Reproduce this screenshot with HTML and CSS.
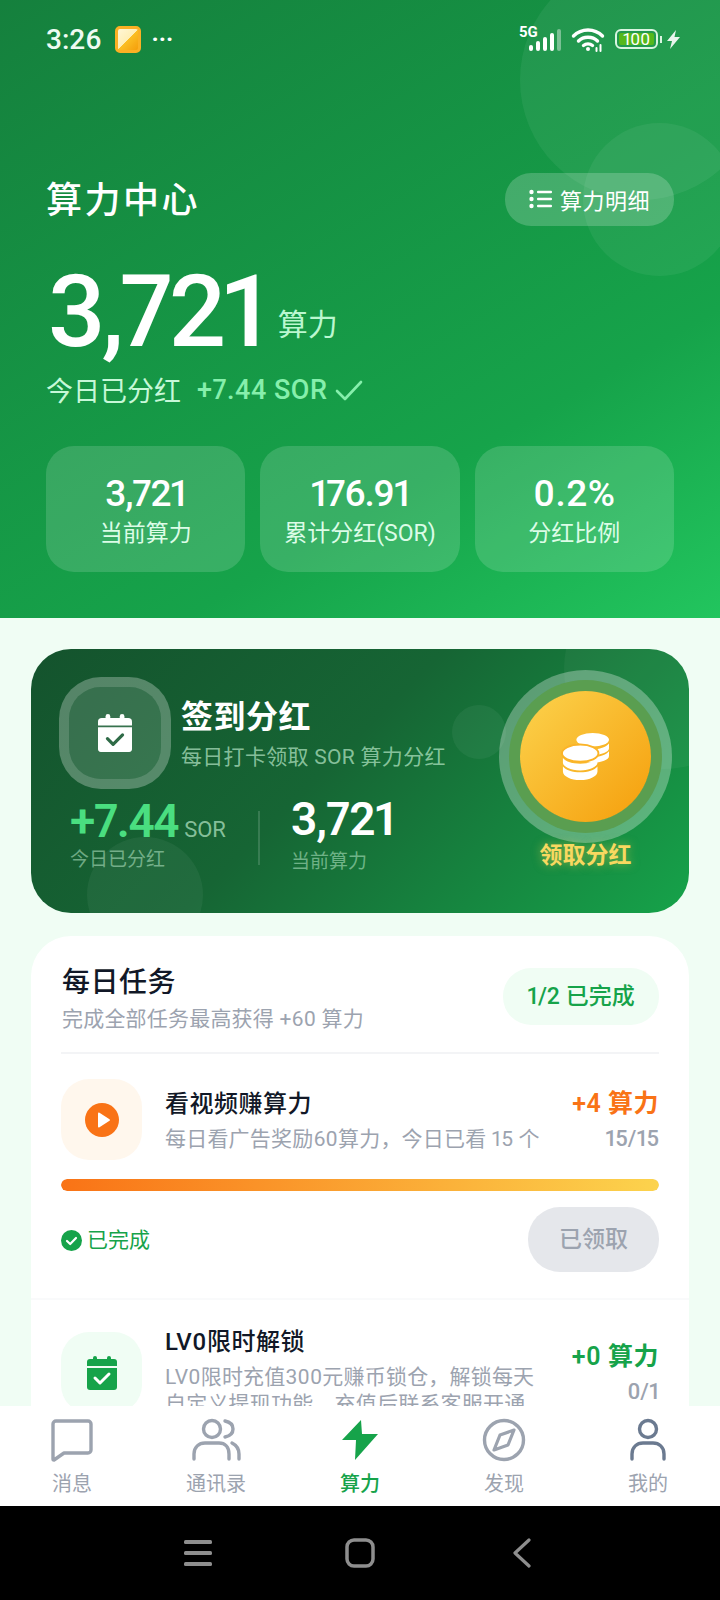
FILE: index.html
```html
<!DOCTYPE html>
<html lang="zh">
<head>
    <meta charset="UTF-8">
    <meta name="viewport" content="width=device-width, initial-scale=1.0">
    <title>算力中心</title>
    <link rel="stylesheet" href="styles.css">
</head>
<body>
<div class="app">
    <main class="main">
        <section class="header">
            <div class="circle circle-a"></div>
            <div class="circle circle-b"></div>
            <div class="status-bar">
                <span class="clock">3:26</span>
                <span class="app-icon"></span>
                <span class="status-dots">···</span>
                <span class="status-right">
                    <span class="signal">
                        <b>5G</b>
                        <svg width="32" height="22" viewBox="0 0 32 22" fill="#fff">
                            <rect x="0" y="16" width="4" height="6" rx="2"/>
                            <rect x="7" y="12" width="4" height="10" rx="2"/>
                            <rect x="14" y="8" width="4" height="14" rx="2"/>
                            <rect x="21" y="4" width="4" height="18" rx="2"/>
                            <rect x="28" y="0" width="4" height="22" rx="2" opacity=".4"/>
                        </svg>
                    </span>
                    <svg class="wifi" width="34" height="25" viewBox="0 0 33 25" fill="none" stroke="#fff" stroke-width="3.4" stroke-linecap="round">
                        <path d="M2 9C10 1 23 1 31 9"/>
                        <path d="M7 14C12 9 21 9 26 14"/>
                        <path d="M12 18.500C14.500 16.500 18.500 16.500 21 18.500"/>
                        <circle cx="16.500" cy="22" r="2" fill="#fff" stroke="none"/>
                        <path d="M25 21v3M29 18v6" stroke-width="2"/>
                    </svg>
                    <span class="battery"><span class="battery-fill">100</span></span>
                    <span class="battery-nub"></span>
                    <svg width="13" height="19" viewBox="0 0 13 19" fill="#fff" opacity=".9"><path d="M9 0 0 11h5l-2 8 10-12H7.500z"/></svg>
                </span>
            </div>

            <div class="title-row">
                <h1>算力中心</h1>
                <div class="detail-btn">
                    <svg width="24" height="20" viewBox="0 0 24 20" fill="#fff">
                        <circle cx="2.500" cy="3" r="2.200"/><circle cx="2.500" cy="10" r="2.200"/><circle cx="2.500" cy="17" r="2.200"/>
                        <rect x="8" y="1.800" width="15" height="2.400" rx="1"/><rect x="8" y="8.800" width="15" height="2.400" rx="1"/><rect x="8" y="15.800" width="15" height="2.400" rx="1"/>
                    </svg>
                    算力明细
                </div>
            </div>

            <div class="power-row">
                <span class="power-num">3,721</span>
                <span class="power-unit">算力</span>
            </div>
            <div class="today-row">
                <span>今日已分红</span>
                <span class="today-val">+7.44 SOR</span>
                <svg width="28" height="22" viewBox="0 0 28 22" fill="none" stroke="#86efac" stroke-width="2.600" stroke-linecap="round" stroke-linejoin="round"><path d="M2 12l8 8L26 3"/></svg>
            </div>

            <div class="stat-cards">
                <div class="stat-card"><div class="stat-val">3,721</div><div class="stat-label">当前算力</div></div>
                <div class="stat-card"><div class="stat-val">176.91</div><div class="stat-label">累计分红(SOR)</div></div>
                <div class="stat-card"><div class="stat-val percent">0.2%</div><div class="stat-label">分红比例</div></div>
            </div>
        </section>

        <section class="sign-card">
            <div class="blob blob-a"></div>
            <div class="blob blob-b"></div>
            <div class="blob blob-c"></div>
            <div class="sign-left">
                <div class="sign-head">
                    <div class="sign-icon">
                        <svg width="34" height="38" viewBox="0 0 36 40" fill="#fff">
                            <rect x="8" y="0" width="5" height="8" rx="2.500"/>
                            <rect x="23" y="0" width="5" height="8" rx="2.500"/>
                            <path d="M4 4h28a4 4 0 0 1 4 4v4H0V8a4 4 0 0 1 4-4z"/>
                            <path d="M0 14h36v23a3 3 0 0 1-3 3H3a3 3 0 0 1-3-3z"/>
                            <path d="M10 26l6 6 10-10" fill="none" stroke="#2f6b47" stroke-width="3.400" stroke-linecap="round" stroke-linejoin="round"/>
                        </svg>
                    </div>
                    <div>
                        <div class="sign-title">签到分红</div>
                        <div class="sign-sub">每日打卡领取 SOR 算力分红</div>
                    </div>
                </div>
                <div class="sign-stats">
                    <div class="sign-stat">
                        <div class="sign-num green">+7.44<small>SOR</small></div>
                        <div class="sign-label">今日已分红</div>
                    </div>
                    <div class="sign-split"></div>
                    <div class="sign-stat">
                        <div class="sign-num">3,721</div>
                        <div class="sign-label power-label">当前算力</div>
                    </div>
                </div>
            </div>
            <div class="claim">
                <div class="coin">
                    <svg width="58" height="48" viewBox="0 0 60 50" fill="#fff">
                        <ellipse cx="38" cy="7" rx="17" ry="7"/>
                        <path d="M21 11c3 4 10 6 17 6s14-2 17-6v5c0 4-8 7-17 7s-17-3-17-7z"/>
                        <path d="M30 24c3 1 5 1 8 1 7 0 14-2 17-6v5c0 4-8 7-17 7-3 0-5 0-8-1z"/>
                        <ellipse cx="25" cy="21" rx="19" ry="9" stroke="#fbb428" stroke-width="2"/>
                        <path d="M7 26c3 4 10 6 18 6s15-2 18-6v5c0 4-8 8-18 8S7 35 7 31z"/>
                        <path d="M7 35c3 4 10 6 18 6s15-2 18-6v5c0 5-8 9-18 9S7 45 7 40z"/>
                    </svg>
                </div>
                <div class="claim-text">领取分红</div>
            </div>
        </section>

        <section class="task-card">
            <div class="task-head">
                <div>
                    <div class="task-title">每日任务</div>
                    <div class="task-sub">完成全部任务最高获得 +60 算力</div>
                </div>
                <div class="task-pill">1/2 已完成</div>
            </div>

            <div class="task-item first">
                <div class="task-row">
                    <div class="task-icon orange-bg">
                        <svg width="34" height="34" viewBox="0 0 34 34"><circle cx="17" cy="17" r="17" fill="#f97316"/><path d="M13 10.500v13a1 1 0 0 0 1.500.8l10-6.500a1 1 0 0 0 0-1.600l-10-6.500a1 1 0 0 0-1.500.8z" fill="#fff"/></svg>
                    </div>
                    <div class="task-body">
                        <div class="task-name">看视频赚算力</div>
                        <div class="task-desc">每日看广告奖励60算力，今日已看 15 个</div>
                    </div>
                    <div class="task-side">
                        <div class="task-reward orange">+4 算力</div>
                        <div class="task-count">15/15</div>
                    </div>
                </div>
                <div class="progress-bar"><div class="progress" style="width: 100%"></div></div>
                <div class="task-foot">
                    <span class="done">
                        <svg width="21" height="21" viewBox="0 0 21 21"><circle cx="10.500" cy="10.500" r="10.500" fill="#16a34a"/><path d="M6 11l3.200 3L15 8" fill="none" stroke="#fff" stroke-width="2.200" stroke-linecap="round" stroke-linejoin="round"/></svg>
                        已完成
                    </span>
                    <div class="claimed-btn">已领取</div>
                </div>
            </div>

            <div class="task-item second">
                <div class="task-row">
                    <div class="task-icon green-bg">
                        <svg width="30" height="34" viewBox="0 0 30 34" fill="#16a34a">
                            <rect x="6" y="0" width="4" height="7" rx="2"/>
                            <rect x="20" y="0" width="4" height="7" rx="2"/>
                            <path d="M3 3h24a3 3 0 0 1 3 3v4H0V6a3 3 0 0 1 3-3z"/>
                            <path d="M0 12h30v19a3 3 0 0 1-3 3H3a3 3 0 0 1-3-3z"/>
                            <path d="M8 22l5 5 9-9" fill="none" stroke="#fff" stroke-width="3" stroke-linecap="round" stroke-linejoin="round"/>
                        </svg>
                    </div>
                    <div class="task-body second-body">
                        <div class="task-name">LV0限时解锁</div>
                        <div class="task-desc">LV0限时充值300元赚币锁仓，解锁每天自定义提现功能，充值后联系客服开通</div>
                    </div>
                    <div class="task-side">
                        <div class="task-reward green">+0 算力</div>
                        <div class="task-count">0/1</div>
                    </div>
                </div>
            </div>
        </section>
    </main>

    <nav class="tabbar">
        <div class="tab">
            <svg width="42" height="44" viewBox="0 0 42 44" fill="none" stroke="#9ca3af" stroke-width="3.400" stroke-linejoin="round"><path d="M5 3h32a3 3 0 0 1 3 3v26a3 3 0 0 1-3 3H13l-10 7a1 1 0 0 1-1-1V6a3 3 0 0 1 3-3z"/></svg>
            <span>消息</span>
        </div>
        <div class="tab">
            <svg width="50" height="44" viewBox="0 0 50 44" fill="none" stroke="#9ca3af" stroke-width="3.400" stroke-linecap="round"><circle cx="21" cy="11" r="8.500"/><path d="M3 41v-5c0-7 5-11 11-11h14c6 0 10 4 10 11v5"/><path d="M34 3c5 1 8 4 8 8s-3 7-8 8"/><path d="M41 25c4 2 7 5 7 11v5"/></svg>
            <span>通讯录</span>
        </div>
        <div class="tab active">
            <svg width="36" height="44" viewBox="0 0 36 44" fill="#16a34a"><path d="M19 2 0 22h14l-1 20 23-26H20z"/></svg>
            <span>算力</span>
        </div>
        <div class="tab">
            <svg width="44" height="44" viewBox="0 0 44 44" fill="none" stroke="#9ca3af" stroke-width="3.400" stroke-linejoin="round"><circle cx="22" cy="22" r="19.500"/><path d="M32 12l-14 5-6 15 14-5z" stroke-width="3.200"/></svg>
            <span>发现</span>
        </div>
        <div class="tab">
            <svg width="36" height="44" viewBox="0 0 36 44" fill="none" stroke="#6b7a90" stroke-width="3.400" stroke-linecap="round"><circle cx="18" cy="11" r="8.500"/><path d="M2 41v-5c0-7 5-11 11-11h10c6 0 11 4 11 11v5"/></svg>
            <span>我的</span>
        </div>
    </nav>

    <div class="navbar">
        <svg width="28" height="28" viewBox="0 0 28 28" fill="#8e8e8e"><rect y="1" width="28" height="4" rx="1.500"/><rect y="12" width="28" height="4" rx="1.500"/><rect y="23" width="28" height="4" rx="1.500"/></svg>
        <svg width="30" height="30" viewBox="0 0 30 30" fill="none" stroke="#8e8e8e" stroke-width="3.500"><rect x="2" y="2" width="26" height="26" rx="7"/></svg>
        <svg class="nav-back" width="20" height="30" viewBox="0 0 20 30" fill="none" stroke="#8e8e8e" stroke-width="3.200" stroke-linecap="round" stroke-linejoin="round"><path d="M17 2 3 15l14 13"/></svg>
    </div>
</div>
</body>
</html>
```

FILE: styles.css
```css
* {
    box-sizing: border-box;
}
html, body {
    margin: 0;
    padding: 0;
}
body {
    font-family: Roboto, "Noto Sans CJK SC", sans-serif;
    font-variant-numeric: proportional-nums;
    background-color: #000;
    color: #111827;
}
.app {
    width: 720px;
    height: 1600px;
    display: flex;
    flex-direction: column;
    overflow: hidden;
}
.main {
    height: 1406px;
    flex: none;
    overflow: hidden;
    background-color: #f0fdf4;
}

/* header */
.header {
    position: relative;
    height: 618px;
    padding: 0 46px;
    overflow: hidden;
    color: #fff;
    background: linear-gradient(150deg, #15803d 0%, #16a34a 70%, #22c55e 100%);
}
.circle {
    position: absolute;
    border-radius: 50%;
    background-color: rgba(255, 255, 255, 0.06);
}
.circle-a {
    width: 240px;
    height: 240px;
    left: 520px;
    top: -40px;
}
.circle-b {
    width: 153px;
    height: 153px;
    left: 583px;
    top: 123px;
}
.status-bar {
    position: relative;
    display: flex;
    align-items: center;
    height: 38px;
    margin: 20px -6px 0 0;
}
.clock {
    font-size: 28px;
    font-weight: 500;
    color: #eefbf2;
}
.app-icon {
    width: 26px;
    height: 27px;
    margin-left: 14px;
    border-radius: 5px;
    background: linear-gradient(135deg, #fff7d6 0%, #ffeeb5 50%, #fbbf24 50%, #f59e0b 100%);
    border: 3px solid #fbb024;
}
.status-dots {
    margin-left: 10px;
    font-size: 24px;
    font-weight: 700;
    line-height: 1;
}
.status-right {
    margin-left: auto;
    display: flex;
    align-items: center;
}
.signal {
    position: relative;
    width: 44px;
    height: 24px;
    display: flex;
    justify-content: flex-end;
    align-items: flex-end;
}
.signal b {
    position: absolute;
    left: 2px;
    top: -2px;
    font-size: 15px;
    line-height: 15px;
}
.wifi {
    margin-left: 10px;
}
.battery {
    display: block;
    width: 43px;
    height: 20px;
    margin-left: 10px;
    padding: 2px;
    border: 2px solid #d9f5e0;
    border-radius: 6px;
}
.battery-fill {
    display: block;
    height: 100%;
    border-radius: 2px;
    background-color: #55b81c;
    color: #fff;
    font-size: 17px;
    line-height: 12px;
    text-align: center;
}
.battery-nub {
    width: 2px;
    height: 7px;
    margin: 0 5px 0 2px;
    background-color: #d9f5e0;
}
.title-row {
    position: relative;
    display: flex;
    justify-content: space-between;
    align-items: center;
    height: 54px;
    margin-top: 114px;
}
.title-row h1 {
    margin: -4px 0 0;
    font-size: 36px;
    font-weight: 500;
    letter-spacing: 2.500px;
}
.detail-btn {
    display: flex;
    align-items: center;
    gap: 7px;
    width: 169px;
    height: 53px;
    padding-left: 24px;
    border-radius: 26px;
    background-color: rgba(255, 255, 255, 0.2);
    font-size: 22px;
    letter-spacing: 0.500px;
}
.power-row {
    position: relative;
    display: flex;
    align-items: flex-end;
    margin-top: 34px;
    height: 104px;
}
.power-num {
    margin-left: 2px;
    font-size: 101px;
    line-height: 104px;
    font-weight: 500;
    letter-spacing: -4px;
}
.power-unit {
    margin: 0 0 19px 13px;
    font-size: 30px;
    line-height: 40px;
    color: #bbf7d0;
}
.today-row {
    position: relative;
    display: flex;
    align-items: center;
    margin-top: 6px;
    font-size: 27px;
    color: #c6f8d8;
}
.today-val {
    margin: 0 8px 0 16px;
    font-weight: 500;
    letter-spacing: 0.500px;
    color: #86efac;
}
.stat-cards {
    position: relative;
    display: flex;
    gap: 15px;
    margin-top: 37px;
}
.stat-card {
    flex: 1;
    height: 126px;
    padding-top: 25px;
    border-radius: 28px;
    text-align: center;
    background-color: rgba(255, 255, 255, 0.15);
}
.stat-val {
    font-size: 37px;
    line-height: 46px;
    font-weight: 500;
    letter-spacing: -1.200px;
}
.stat-val.percent {
    letter-spacing: 0.500px;
}
.stat-label {
    margin-top: 1px;
    font-size: 23px;
    line-height: 32px;
    color: #dcfce7;
}

/* sign card */
.sign-card {
    position: relative;
    display: flex;
    justify-content: space-between;
    height: 264px;
    margin: 31px 31px 0;
    overflow: hidden;
    border-radius: 40px;
    color: #fff;
    background: linear-gradient(135deg, #14532d 0%, #166534 45%, #16a34a 100%);
}
.blob {
    position: absolute;
    border-radius: 50%;
    background-color: rgba(255, 255, 255, 0.05);
}
.blob-a {
    width: 54px;
    height: 54px;
    left: 421px;
    top: 56px;
}
.blob-b {
    width: 116px;
    height: 116px;
    left: 56px;
    top: 188px;
}
.blob-c {
    width: 200px;
    height: 200px;
    left: 533px;
    top: -80px;
    background-color: rgba(255, 255, 255, 0.04);
}
.sign-left {
    position: relative;
    padding: 38px 0 0 38px;
}
.sign-head {
    display: flex;
    gap: 20px;
}
.sign-icon {
    flex: none;
    display: flex;
    justify-content: center;
    align-items: center;
    width: 92px;
    height: 92px;
    border-radius: 32px;
    background-color: rgba(255, 255, 255, 0.15);
    box-shadow: 0 0 0 10px rgba(255, 255, 255, 0.28);
}
.sign-title {
    margin-top: 5px;
    font-size: 32px;
    line-height: 50px;
    font-weight: 700;
    letter-spacing: 0.500px;
}
.sign-sub {
    font-size: 21px;
    line-height: 30px;
    letter-spacing: 0.300px;
    color: rgba(200, 245, 215, 0.65);
}
.sign-stats {
    display: flex;
    align-items: center;
    margin: 17px 0 0 1px;
}
.sign-num {
    font-size: 46px;
    line-height: 46px;
    font-weight: 600;
    letter-spacing: -1px;
}
.sign-num small {
    margin-left: 6px;
    font-size: 22px;
    line-height: 1;
    font-weight: 400;
    letter-spacing: 0;
    color: rgba(200, 245, 215, 0.65);
}
.sign-num.green {
    color: #4ade80;
    letter-spacing: -1.400px;
}
.sign-label {
    margin-top: 3px;
    font-size: 19px;
    line-height: 26px;
    color: rgba(200, 245, 215, 0.5);
}
.sign-label.power-label {
    margin-top: 7px;
}
.sign-split {
    width: 2px;
    height: 54px;
    margin: 4px 31px 0 32px;
    background-color: rgba(255, 255, 255, 0.15);
}
.claim {
    position: relative;
    width: 131px;
    margin: 42px 38px 0 0;
    text-align: center;
}
.coin {
    display: flex;
    justify-content: center;
    align-items: center;
    width: 131px;
    height: 131px;
    padding-right: 2px;
    border-radius: 50%;
    background: linear-gradient(135deg, #fcd34d 0%, #f59e0b 100%);
    box-shadow: 0 0 0 11px #5a9e50, 0 0 0 21px rgba(255, 255, 255, 0.3);
}
.claim-text {
    margin-top: 17px;
    font-size: 23px;
    line-height: 34px;
    font-weight: 700;
    color: #f8d860;
    text-shadow: 0 0 10px rgba(252, 211, 77, 0.5);
}

/* tasks */
.task-card {
    height: 520px;
    margin: 23px 31px 0;
    border-radius: 40px;
    background-color: #fff;
}
.task-head {
    display: flex;
    justify-content: space-between;
    height: 118px;
    margin: 0 30px 0 30px;
    padding-top: 27px;
    border-bottom: 2px solid #f3f4f6;
}
.task-title {
    margin-left: 1px;
    font-size: 28px;
    line-height: 40px;
    font-weight: 500;
    letter-spacing: 0.500px;
}
.task-sub {
    margin: 1px 0 0 1px;
    font-size: 21px;
    line-height: 30px;
    letter-spacing: 0.200px;
    color: #9ca3af;
}
.task-pill {
    width: 156px;
    height: 57px;
    margin-top: 5px;
    border-radius: 28px;
    background-color: #f0fdf4;
    color: #16a34a;
    font-size: 23px;
    font-weight: 500;
    line-height: 57px;
    text-align: center;
}
.task-item {
    padding: 0 30px;
}
.task-item.first {
    height: 246px;
    padding-top: 25px;
    border-bottom: 2px solid #f9fafb;
}
.task-item.second {
    padding-top: 32px;
}
.task-row {
    display: flex;
}
.task-icon {
    flex: none;
    display: flex;
    justify-content: center;
    align-items: center;
    width: 81px;
    height: 81px;
    border-radius: 28px;
}
.orange-bg {
    background-color: #fff7ed;
}
.green-bg {
    background-color: #f0fdf4;
}
.task-body {
    flex: 1;
    min-width: 0;
    margin-left: 23px;
    margin-top: 7px;
}
.task-body.second-body {
    margin-top: -8px;
}
.task-name {
    font-size: 24px;
    line-height: 36px;
    font-weight: 500;
    letter-spacing: 0.500px;
}
.task-desc {
    margin-top: 4px;
    width: 380px;
    font-size: 21px;
    line-height: 27px;
    letter-spacing: 0.200px;
    color: #9ca3af;
}
.task-side {
    flex: none;
    margin-top: 7px;
    text-align: right;
}
.task-reward {
    font-size: 25px;
    line-height: 36px;
    font-weight: 600;
    letter-spacing: 0.500px;
}
.orange {
    color: #f97316;
}
.green {
    color: #16a34a;
}
.task-count {
    margin-top: 2px;
    font-size: 22px;
    line-height: 30px;
    font-weight: 500;
    color: #9ca3af;
}
.progress-bar {
    height: 12px;
    margin-top: 19px;
    overflow: hidden;
    border-radius: 6px;
    background-color: #f3f4f6;
}
.progress {
    height: 100%;
    border-radius: 6px;
    background: linear-gradient(90deg, #f97316 0%, #fcd34d 100%);
}
.task-foot {
    display: flex;
    justify-content: space-between;
    align-items: center;
    margin-top: 16px;
}
.done {
    display: flex;
    align-items: center;
    gap: 5px;
    margin-top: -4px;
    font-size: 21px;
    color: #16a34a;
}
.done svg {
    margin-top: 6px;
}
.claimed-btn {
    width: 131px;
    height: 65px;
    border-radius: 32px;
    background-color: #e5e7eb;
    color: #9ca3af;
    font-size: 23px;
    font-weight: 500;
    line-height: 65px;
    text-align: center;
}

/* bottom */
.tabbar {
    height: 100px;
    flex: none;
    display: grid;
    grid-template-columns: repeat(5, 1fr);
    background-color: #fff;
}
.tab {
    display: flex;
    flex-direction: column;
    align-items: center;
    padding-top: 12px;
    font-size: 20px;
    line-height: 28px;
    color: #9ca3af;
}
.tab span {
    margin-top: 8px;
}
.tab.active {
    color: #16a34a;
    font-weight: 500;
}
.navbar {
    flex: 1;
    display: flex;
    align-items: center;
    gap: 133px;
    padding-left: 184px;
    background-color: #000;
}
.nav-back {
    margin-left: 4px;
}
```
